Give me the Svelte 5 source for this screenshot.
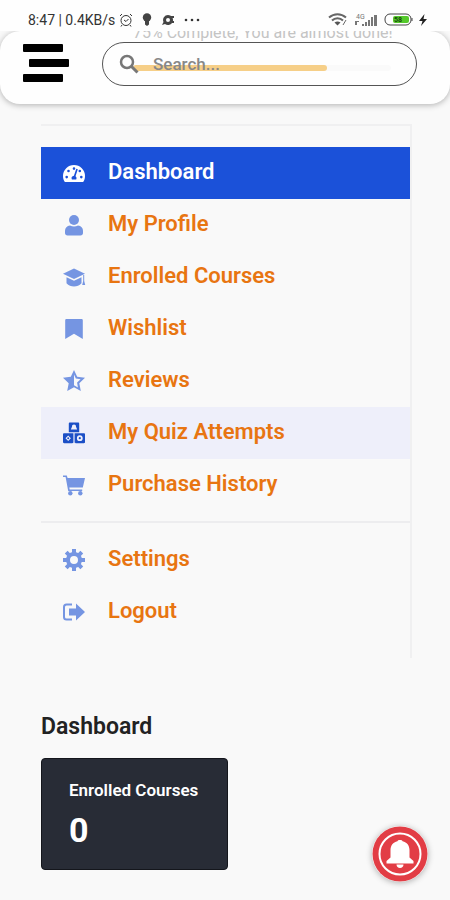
<script>
  let search = $state('');
  let progress = 75;
  let enrolled = 0;

  const menu = [
    { id: 'dashboard', label: 'Dashboard', active: true },
    { id: 'profile', label: 'My Profile' },
    { id: 'courses', label: 'Enrolled Courses' },
    { id: 'wishlist', label: 'Wishlist' },
    { id: 'reviews', label: 'Reviews' },
    { id: 'quiz', label: 'My Quiz Attempts', hover: true },
    { id: 'history', label: 'Purchase History' }
  ];

  const account = [
    { id: 'settings', label: 'Settings' },
    { id: 'logout', label: 'Logout' }
  ];
</script>

{#snippet icon(id)}
  <svg class="icon" viewBox="0 0 24 24" fill="currentColor" aria-hidden="true">
    {#if id === 'dashboard'}
      <path fill-rule="evenodd" d="M12 4A11 11 0 0 0 1 15c0 2 .5 4 1.500 5.500.3.400.6.500 1 .5h17c.4 0 .7-.1 1-.5C22.500 19 23 17 23 15A11 11 0 0 0 12 4zM12 6.300a1.300 1.300 0 1 1 0 2.600 1.300 1.300 0 0 1 0-2.600zM6.500 8.700a1.300 1.300 0 1 1 0 2.600 1.300 1.300 0 0 1 0-2.600zM4.700 14.800a1.300 1.300 0 1 1 0 2.600 1.300 1.300 0 0 1 0-2.600zM19.300 14.800a1.300 1.300 0 1 1 0 2.600 1.300 1.300 0 0 1 0-2.600zM17.800 8.700a1.300 1.300 0 1 1 0 2.600 1.300 1.300 0 0 1 0-2.600zM14.300 7.800l1.500.5-2.300 7c1.200 1 1.300 2 .7 3.200H9.900c-1-2 .1-3.500 2-3.700z" />
    {:else if id === 'profile'}
      <circle cx="12" cy="7" r="5" />
      <path d="M8 12.500c2.500 1.300 5.500 1.300 8 0 3 .3 5 2.500 5 5.200V20c0 1.500-1 2.500-2.500 2.500h-13C4 22.500 3 21.500 3 20v-2.300c0-2.700 2-4.900 5-5.200z" />
    {:else if id === 'courses'}
      <path d="M12 3.500 23 8.700 12 14 1 8.700z" />
      <path d="M4.500 12.200l7.500 3.500 7.500-3.500v6c-4 4.300-11 4.300-15 0z" />
      <path d="M21.200 10h1v6l1 4h-3l1-4z" />
    {:else if id === 'wishlist'}
      <path d="M4.500 2h15c.7 0 1.300.5 1.300 1.300V22L12 16.800 3.200 22V3.300C3.200 2.500 3.800 2 4.500 2z" />
    {:else if id === 'reviews'}
      <path fill-rule="evenodd" d="M12 1l3.200 6.800 7.800 1-5.700 5.400L18.800 22 12 18.200 5.200 22l1.500-7.800L1 8.800l7.800-1zM12 5.500v10.800l3.900 2.200-.8-4.900 3.500-3.400-4.800-.7z" />
    {:else if id === 'quiz'}
      <path fill-rule="evenodd" d="M8 1.500h8c.8 0 1.200.4 1.200 1.200v8.500H6.800V2.700c0-.8.4-1.200 1.200-1.200zM12 3.500c-1.300 0-2 .9-2 2.200L8.800 8.600h6.400L14 5.700c0-1.300-.7-2.200-2-2.200z" />
      <path fill-rule="evenodd" d="M2.200 12.300h9.200V21c0 .8-.4 1.200-1.200 1.200h-8C1.400 22.200 1 21.800 1 21v-7.500c0-.8.4-1.200 1.200-1.200zM6.200 14.500l-2.700 2.700 2.700 2.700 2.700-2.700zM12.600 12.300h9.200c.8 0 1.200.4 1.200 1.200V21c0 .8-.4 1.200-1.200 1.200h-8c-.8 0-1.200-.4-1.200-1.200zM17.800 14.300a2.900 2.900 0 1 0 0 5.800 2.900 2.900 0 0 0 0-5.800z" />
      <circle cx="6.200" cy="17.200" r="1" />
      <circle cx="17.800" cy="17.200" r="1.100" />
    {:else if id === 'history'}
      <path d="M1 2.500h3.800L5.600 5H23l-2.200 9.500H7.300l.4 2h12.500V18H6.200L3.600 4H1z" />
      <circle cx="8.300" cy="20.300" r="2.200" />
      <circle cx="18.300" cy="20.300" r="2.200" />
    {:else if id === 'settings'}
      <circle cx="12" cy="12" r="6" fill="none" stroke="currentColor" stroke-width="4" />
      <path fill="none" stroke="currentColor" stroke-width="4" d="M12 1v4M12 19v4M1 12h4M19 12h4M4.200 4.200l2.900 2.900M16.900 16.900l2.900 2.900M4.200 19.800l2.900-2.900M16.900 7.100l2.900-2.900" />
    {:else if id === 'logout'}
      <path d="M14 3.500l9 8.500-9 8.500v-5H7v-7h7z" />
      <path fill="none" stroke="currentColor" stroke-width="2" d="M10 4.500H4.500C3 4.500 2 5.500 2 7v10c0 1.500 1 2.500 2.500 2.500H10" />
    {/if}
  </svg>
{/snippet}

{#snippet row(item)}
  <li>
    <a href="#{item.id}" class="item" class:active={item.active} class:hover={item.hover}>
      {@render icon(item.id)}
      <span>{item.label}</span>
    </a>
  </li>
{/snippet}

<div class="status">
  <span>8:47 | 0.4KB/s</span>
  <svg width="14" height="14" viewBox="0 0 14 14" fill="none" stroke="#333" aria-hidden="true">
    <circle cx="7" cy="7.500" r="5" />
    <path d="M5 7l2 1.500L9.500 6M1 3l2-2M13 3l-2-2M3 12l-1 1.500M11 12l1 1.500" />
  </svg>
  <svg class="bulb" width="10" height="13" viewBox="0 0 10 13" fill="#444" aria-hidden="true">
    <circle cx="5" cy="4.500" r="4.200" />
    <path d="M3 8h4v3.500L5 13l-2-1.500z" />
  </svg>
  <svg class="bulb" width="14" height="12" viewBox="0 0 14 12" fill="#444" aria-hidden="true">
    <path fill-rule="evenodd" d="M7 1a5 5 0 1 1-3 9l-3 1 1.500-3A5 5 0 0 1 7 1zM7 4a2 2 0 1 0 0 4 2 2 0 0 0 0-4z" />
    <path d="M10 2h3v2h-3zM11 7h2v2h-2z" />
  </svg>
  <svg class="bulb" width="16" height="4" viewBox="0 0 16 4" fill="#333" aria-hidden="true">
    <circle cx="2" cy="2" r="1.300" /><circle cx="8" cy="2" r="1.300" /><circle cx="14" cy="2" r="1.300" />
  </svg>
  <div class="signals">
    <svg width="20" height="13" viewBox="0 0 20 13" fill="none" stroke="#666" stroke-width="2" aria-hidden="true">
      <path d="M1 4.500c5-4.500 12-4.500 17 0M4 7.500c3-3 8-3 11 0" />
      <path d="M6.500 9.500c2-1.500 4-1.500 6 0l-3 3z" fill="#555" stroke="none" />
      <path d="M15 12l3-5" stroke-width="1" />
    </svg>
    <svg width="24" height="14" viewBox="0 0 24 14" fill="#777" aria-hidden="true">
      <text x="2" y="6" font-size="7">4G</text>
      <path d="M8 11h2v2H8zM11 9h2v4h-2zM14 7h2v6h-2zM17 4h2v9h-2zM20 2h3v11h-3zM1 8h4v1H3v3H1z" />
    </svg>
    <svg width="29" height="13" viewBox="0 0 29 13" aria-hidden="true">
      <rect x="1" y="1" width="26" height="11" rx="5" fill="#fff" stroke="#444" />
      <rect x="9" y="3" width="16" height="7" rx="2" fill="#55c92b" />
      <text x="10" y="9" font-size="7" font-weight="700" fill="#164a0a">58</text>
      <path d="M28 5v3" stroke="#444" />
    </svg>
    <svg width="8" height="12" viewBox="0 0 8 12" fill="#222" aria-hidden="true">
      <path d="M5.500 0 0 7h3.500L2 12l6-7H4.500z" />
    </svg>
  </div>
</div>

<header>
  <button class="burger" aria-label="Menu">
    <i></i><i class="shift"></i><i></i>
  </button>
  <div class="center">
    <div class="progress" aria-hidden="true">
      <p>{progress}% Complete, You are almost done!</p>
      <div class="track"><div class="fill" style="width: {progress}%"></div></div>
    </div>
    <label class="search">
      <svg width="20" height="20" viewBox="0 0 20 20" fill="none" stroke="#777" aria-hidden="true">
        <circle cx="8" cy="8" r="6" stroke-width="2.500" />
        <path d="M12.500 12.500l6 6" stroke-width="3" />
      </svg>
      <input type="text" placeholder="Search..." aria-label="Search" bind:value={search} />
    </label>
  </div>
</header>

<main>
  <nav>
    <ul>
      {#each menu as item}
        {@render row(item)}
      {/each}
    </ul>
    <ul class="account">
      {#each account as item}
        {@render row(item)}
      {/each}
    </ul>
  </nav>

  <h1>Dashboard</h1>
  <section class="card">
    <p>Enrolled Courses</p>
    <strong>{enrolled}</strong>
  </section>
</main>

<button class="bell" aria-label="Notifications">
  <svg width="56" height="56" viewBox="0 0 56 56" aria-hidden="true">
    <circle cx="28" cy="28" r="27.500" fill="#e23d45" />
    <circle cx="28" cy="28" r="20.500" fill="none" stroke="#fff" stroke-width="2" />
    <path fill="#fff" d="M28 14c1.500 0 2.300.4 2.600 1.200 4.400 1 6.900 4.400 6.900 8.800v7.500l4 3.500v2.500h-27V35l4-3.500V24c0-4.400 2.500-7.800 6.900-8.800.3-.8 1.100-1.200 2.600-1.200zM24.500 38.500h7c0 2-1.500 3.500-3.500 3.500s-3.500-1.500-3.500-3.500z" />
  </svg>
</button>

<style>
  :global(body) {
    margin: 0;
    background: #f9f9f9;
    font-family: Roboto, "Liberation Sans", sans-serif;
  }

  .status {
    display: flex;
    align-items: center;
    gap: 4px;
    height: 31px;
    padding: 8px 23px 0 28px;
    box-sizing: border-box;
    background: #fefefe;
    color: #333;
    font-size: 14px;
    white-space: nowrap;
  }

  .bulb {
    margin-left: 5px;
  }

  .signals {
    display: flex;
    align-items: center;
    gap: 6px;
    margin-left: auto;
  }

  header {
    display: flex;
    align-items: flex-start;
    height: 73px;
    padding: 11px 33px 0 23px;
    box-sizing: border-box;
    border-radius: 20px;
    background: #fefefe;
    box-shadow: 0 1px 6px rgba(0, 0, 0, 0.3);
    clip-path: inset(0 0 -12px 0);
  }

  .burger {
    display: flex;
    flex-direction: column;
    justify-content: center;
    gap: 7px;
    width: 46px;
    height: 42px;
    padding: 0;
    border: 0;
    background: none;
  }

  .burger i {
    width: 40px;
    height: 8px;
    border-radius: 1px;
    background: #000;
  }

  .burger .shift {
    align-self: flex-end;
  }

  .center {
    position: relative;
    flex: 1;
    margin-left: 33px;
  }

  .progress {
    position: absolute;
    top: -19px;
    left: 31px;
    right: 26px;
  }

  .progress p {
    margin: 0;
    color: #c4c4c4;
    font-size: 16px;
    line-height: 20px;
    white-space: nowrap;
  }

  .track {
    height: 6px;
    margin-top: 22px;
    border-radius: 3px;
    background: #fafafa;
  }

  .fill {
    height: 100%;
    border-radius: 3px;
    background: #f6cf88;
  }

  .search {
    position: relative;
    display: flex;
    align-items: center;
    gap: 14px;
    height: 44px;
    padding: 0 16px;
    box-sizing: border-box;
    border: 1px solid #555;
    border-radius: 22px;
  }

  .search input {
    flex: 1;
    min-width: 0;
    padding: 0;
    border: 0;
    outline: 0;
    background: none;
    color: #444;
    font: 500 17px/20px Roboto, sans-serif;
  }

  .search input::placeholder {
    color: #888;
    opacity: 1;
  }

  main {
    padding: 20px 38px 30px 41px;
  }

  nav {
    padding: 21px 0 20px;
    border-top: 2px solid #f0f0f1;
    border-right: 2px solid #f0f0f1;
  }

  ul {
    margin: 0;
    padding: 0;
    list-style: none;
  }

  .account {
    margin-top: 10px;
    padding-top: 11px;
    border-top: 2px solid #ededef;
  }

  .item {
    display: flex;
    align-items: center;
    gap: 22px;
    height: 52px;
    padding: 0 21px;
    box-sizing: border-box;
    color: #e87511;
    font-size: 22px;
    font-weight: 600;
    line-height: 24px;
    text-decoration: none;
  }

  .item span {
    padding-bottom: 2px;
  }

  .icon {
    width: 24px;
    height: 24px;
    color: #7595e2;
  }

  .active {
    background: #1b51d9;
    color: #fff;
  }

  .active .icon {
    color: #fff;
  }

  .hover {
    background: #eeeffa;
  }

  .hover .icon {
    color: #1b4fc6;
  }

  h1 {
    margin: 55px 0 17px;
    color: #222;
    font-size: 23px;
    font-weight: 600;
    line-height: 28px;
  }

  .card {
    width: 50%;
    min-width: 187px;
    padding: 20px 27px;
    box-sizing: border-box;
    border: 1px solid #14161c;
    border-radius: 4px;
    background: #282c36;
    color: #fff;
  }

  .card p {
    margin: 0 0 10px;
    font-size: 17px;
    font-weight: 600;
    line-height: 22px;
    white-space: nowrap;
  }

  .card strong {
    display: block;
    font-size: 34px;
    line-height: 38px;
  }

  .bell {
    position: fixed;
    right: 22px;
    bottom: 18px;
    width: 56px;
    height: 56px;
    padding: 0;
    border: 0;
    border-radius: 50%;
    background: none;
    box-shadow: 0 1px 6px rgba(0, 0, 0, 0.3);
  }
</style>
